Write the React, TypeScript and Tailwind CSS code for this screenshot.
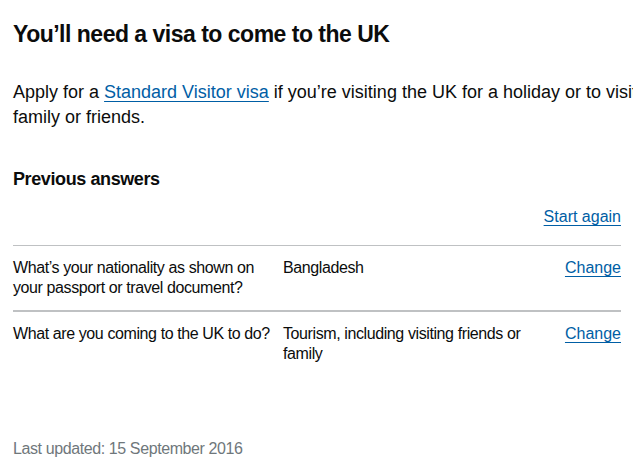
import React from 'react';

type Answer = {
  question: string;
  answer: string;
};

const answers: Answer[] = [
  {
    question: 'What’s your nationality as shown on your passport or travel document?',
    answer: 'Bangladesh',
  },
  {
    question: 'What are you coming to the UK to do?',
    answer: 'Tourism, including visiting friends or family',
  },
];

const linkClass = 'text-[#005ea5] underline decoration-1 underline-offset-[3px]';

const App: React.FC = () => {
  return (
    <div className="min-h-screen overflow-hidden bg-white font-['Liberation_Sans',Arial,sans-serif] text-[#0b0c0c]">
      <main className="pl-[13px] pr-[12px]">
        <h1 className="mt-[19px] text-[23px] font-bold leading-[30px] tracking-[-0.5px]">
          You’ll need a visa to come to the UK
        </h1>

        <p className="mt-[31px] w-[650px] text-[18px] leading-[25px]">
          Apply for a{' '}
          <a href="#" className={linkClass}>
            Standard Visitor visa
          </a>{' '}
          if you’re visiting the UK for a holiday or to visit family or friends.
        </p>

        <h2 className="mt-[37px] text-[18px] font-bold leading-[25px] tracking-[-0.4px]">
          Previous answers
        </h2>

        <div className="mt-[15px] flex justify-end pb-[18px] text-[16px] leading-[20px]">
          <a href="#" className={linkClass}>
            Start again
          </a>
        </div>

        {/* answer rows */}
        <div className="text-[16px] leading-[20px] tracking-[-0.4px]">
          {answers.map((item, i) => (
            <div
              key={item.question}
              className={`grid grid-cols-[270px_1fr_auto] border-t border-[#bfc1c3] py-[12px] ${
                i === 0 ? 'border-b' : ''
              }`}
            >
              <div className="pr-[4px]">{item.question}</div>
              <div className="pr-[30px]">{item.answer}</div>
              <div className="text-right tracking-normal">
                <a href="#" className={linkClass}>
                  Change
                </a>
              </div>
            </div>
          ))}
        </div>

        <p className="mt-[63px] text-[16px] leading-[20px] tracking-[-0.4px] text-[#6f777b]">
          Last updated: 15 September 2016
        </p>
      </main>
    </div>
  );
};

export default App;
